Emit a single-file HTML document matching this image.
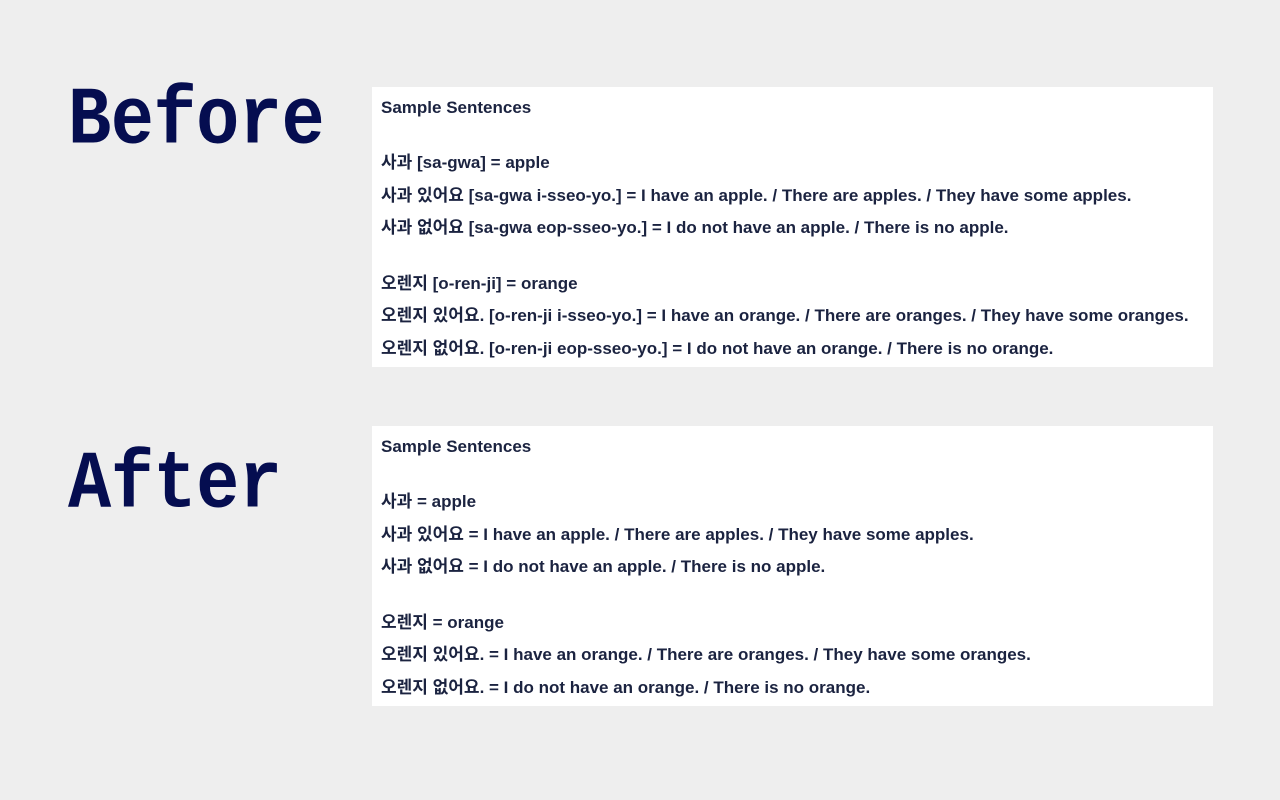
<!DOCTYPE html>
<html><head><style>
body{margin:0;width:1280px;height:800px;background:#eeeeee;position:relative;overflow:hidden;font-family:"Liberation Sans","Noto Sans CJK KR",sans-serif;}
.big{position:absolute;left:68px;font-family:"Liberation Mono",monospace;font-weight:bold;font-size:72px;color:#050d50;transform:scaleY(1.14);transform-origin:left top;line-height:72px;letter-spacing:-0.5px}
.box{position:absolute;left:372px;width:841px;height:280px;background:#fff;color:#1b2340;font-size:17px;font-weight:bold;}
.box div{position:absolute;left:9px;white-space:nowrap;line-height:20px}
</style></head><body>
<div class="big" style="top:80px">Before</div>
<div class="big" style="top:444px">After</div>
<div class="box" style="top:87px">
<div style="top:11px">Sample Sentences</div>
<div style="top:66px">사과 [sa-gwa] = apple</div>
<div style="top:99px">사과 있어요 [sa-gwa i-sseo-yo.] = I have an apple. / There are apples. / They have some apples.</div>
<div style="top:131px">사과 없어요 [sa-gwa eop-sseo-yo.] = I do not have an apple. / There is no apple.</div>
<div style="top:187px">오렌지 [o-ren-ji] = orange</div>
<div style="top:219px">오렌지 있어요. [o-ren-ji i-sseo-yo.] = I have an orange. / There are oranges. / They have some oranges.</div>
<div style="top:252px">오렌지 없어요. [o-ren-ji eop-sseo-yo.] = I do not have an orange. / There is no orange.</div>
</div>
<div class="box" style="top:426px">
<div style="top:11px">Sample Sentences</div>
<div style="top:66px">사과 = apple</div>
<div style="top:99px">사과 있어요 = I have an apple. / There are apples. / They have some apples.</div>
<div style="top:131px">사과 없어요 = I do not have an apple. / There is no apple.</div>
<div style="top:187px">오렌지 = orange</div>
<div style="top:219px">오렌지 있어요. = I have an orange. / There are oranges. / They have some oranges.</div>
<div style="top:252px">오렌지 없어요. = I do not have an orange. / There is no orange.</div>
</div>
</body></html>
